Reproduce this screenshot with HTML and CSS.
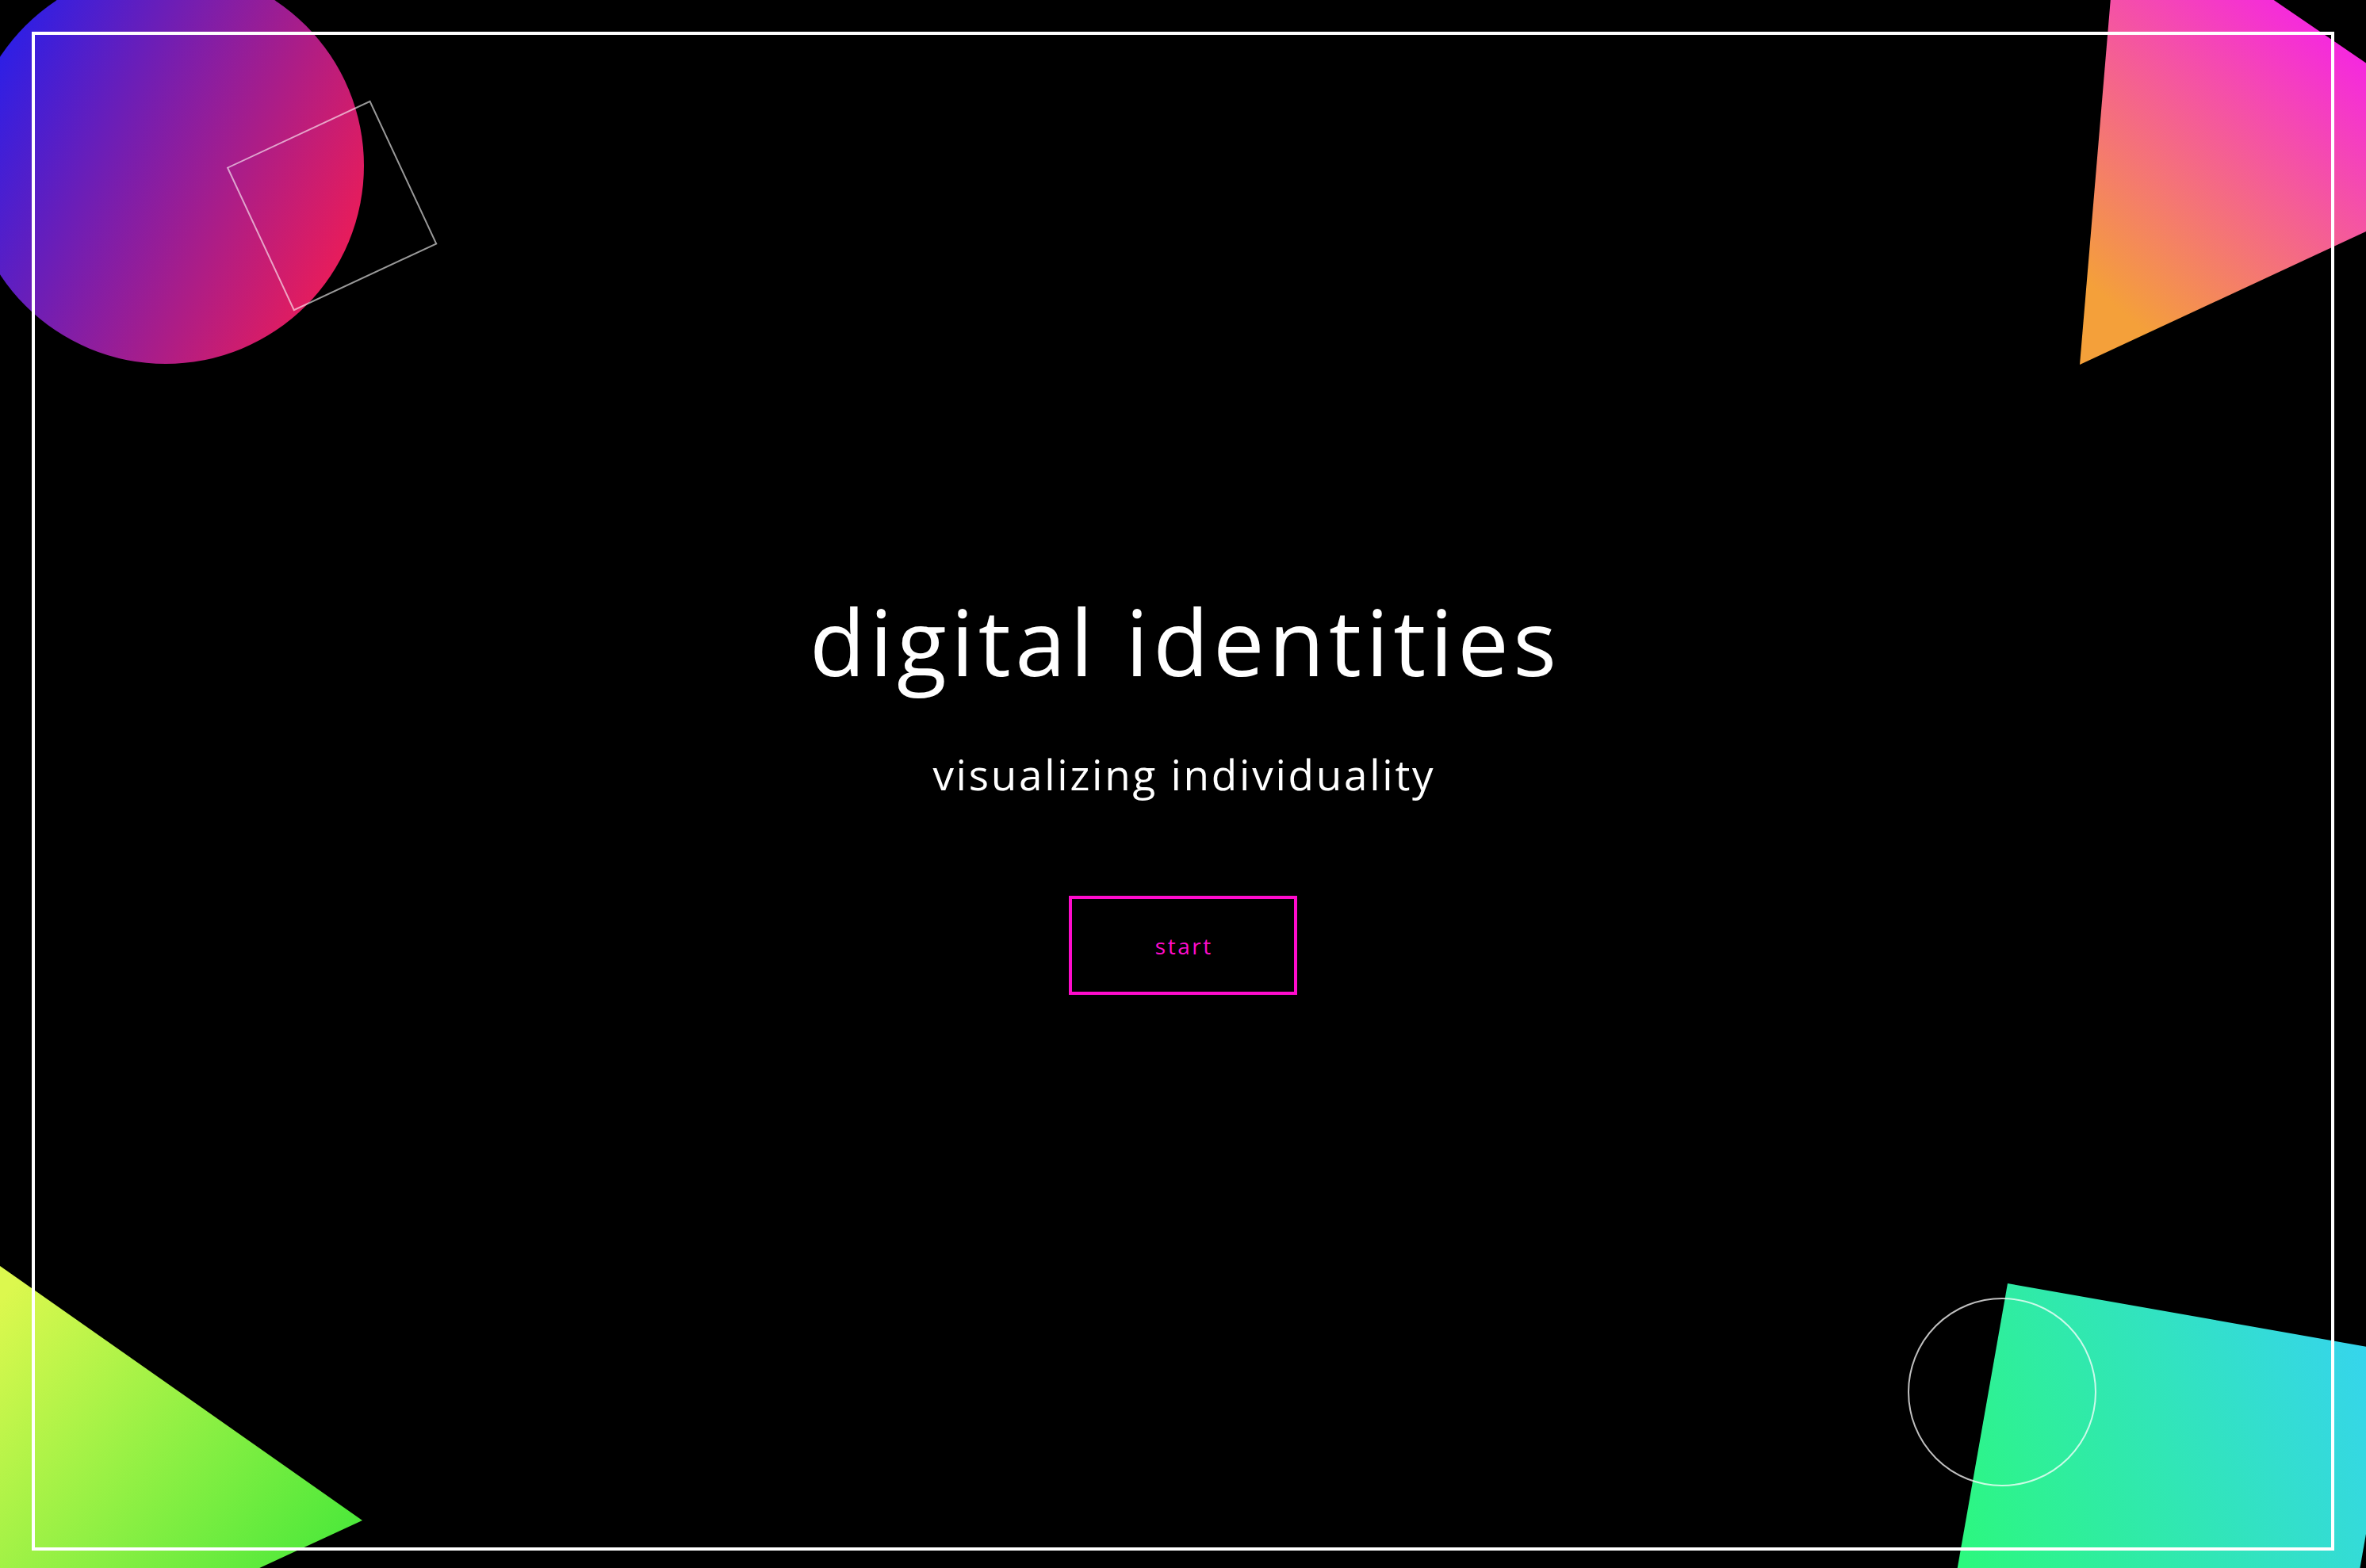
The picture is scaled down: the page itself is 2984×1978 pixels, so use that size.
FILE: index.html
```html
<!DOCTYPE html>
<html lang="en">
<head>
<meta charset="utf-8">
<title>digital identities</title>
<link rel="stylesheet" href="styles.css">
</head>
<body>
<svg class="shapes" viewBox="0 0 2984 1978" preserveAspectRatio="none" aria-hidden="true">
  <defs>
    <linearGradient id="gCircle" gradientUnits="userSpaceOnUse" x1="-30" y1="110" x2="450" y2="330">
      <stop offset="0" stop-color="#2a1fe8"/>
      <stop offset="1" stop-color="#ee1c56"/>
    </linearGradient>
    <linearGradient id="gTri1" gradientUnits="userSpaceOnUse" x1="2660" y1="380" x2="2950" y2="40">
      <stop offset="0" stop-color="#f4a03a"/>
      <stop offset="1" stop-color="#f526e2"/>
    </linearGradient>
    <linearGradient id="gTri2" gradientUnits="userSpaceOnUse" x1="0" y1="1640" x2="420" y2="1990">
      <stop offset="0" stop-color="#dcf84e"/>
      <stop offset="1" stop-color="#48e83a"/>
    </linearGradient>
    <linearGradient id="gSquare" gradientUnits="userSpaceOnUse" x1="2470" y1="1960" x2="3000" y2="1720">
      <stop offset="0" stop-color="#2cf87e"/>
      <stop offset="1" stop-color="#36d4ee"/>
    </linearGradient>
  </defs>
  <circle cx="209" cy="209" r="250" fill="url(#gCircle)"/>
  <rect x="-100" y="-100" width="198" height="198" fill="none" stroke="rgba(255,255,255,0.6)" stroke-width="2" transform="translate(420 260) rotate(-25)"/>
  <polygon points="2673,-133 2623,460 3169,206" fill="url(#gTri1)"/>
  <polygon points="-34,1573 457,1918 -88,2170" fill="url(#gTri2)"/>
  <polygon points="2532,1619 3024.4,1705.8 2937.6,2198.2 2445.2,2111.4" fill="url(#gSquare)"/>
  <circle cx="2525" cy="1756" r="118" fill="none" stroke="rgba(255,255,255,0.75)" stroke-width="2"/>
</svg>
<main class="frame">
  <h1 class="title">digital identities</h1>
  <p class="subtitle">visualizing individuality</p>
  <a class="start" href="#">start</a>
</main>
</body>
</html>
```
FILE: styles.css
```css
html, body {
  margin: 0;
  height: 100%;
}

body {
  position: relative;
  box-sizing: border-box;
  height: 100vh;
  padding: 40px 40px 22px;
  background: #000;
  color: #fff;
  font-family: "Open Sans", "Noto Sans", sans-serif;
  overflow: hidden;
}

.shapes {
  position: absolute;
  inset: 0;
  width: 100%;
  height: 100%;
  z-index: 0;
}

.frame {
  position: relative;
  z-index: 1;
  box-sizing: border-box;
  height: 100%;
  border: 4px solid #fff;
  padding-top: 10px;
  display: flex;
  flex-direction: column;
  align-items: center;
  justify-content: center;
}

.title {
  margin: 0;
  font-size: 115px;
  font-weight: 400;
  line-height: 1;
  letter-spacing: 5.5px;
  text-indent: 5.5px;
}

.subtitle {
  margin: 84px 0 0;
  font-size: 53px;
  font-weight: 400;
  line-height: 1;
  letter-spacing: 2.75px;
  text-indent: 2.75px;
}

.start {
  margin-top: 127px;
  box-sizing: border-box;
  width: 288px;
  height: 125px;
  border: 4px solid #ff0ccc;
  color: #ff0ccc;
  font-size: 28px;
  font-weight: 400;
  letter-spacing: 2.5px;
  text-indent: 2.5px;
  text-decoration: none;
  display: flex;
  align-items: center;
  justify-content: center;
}
```
